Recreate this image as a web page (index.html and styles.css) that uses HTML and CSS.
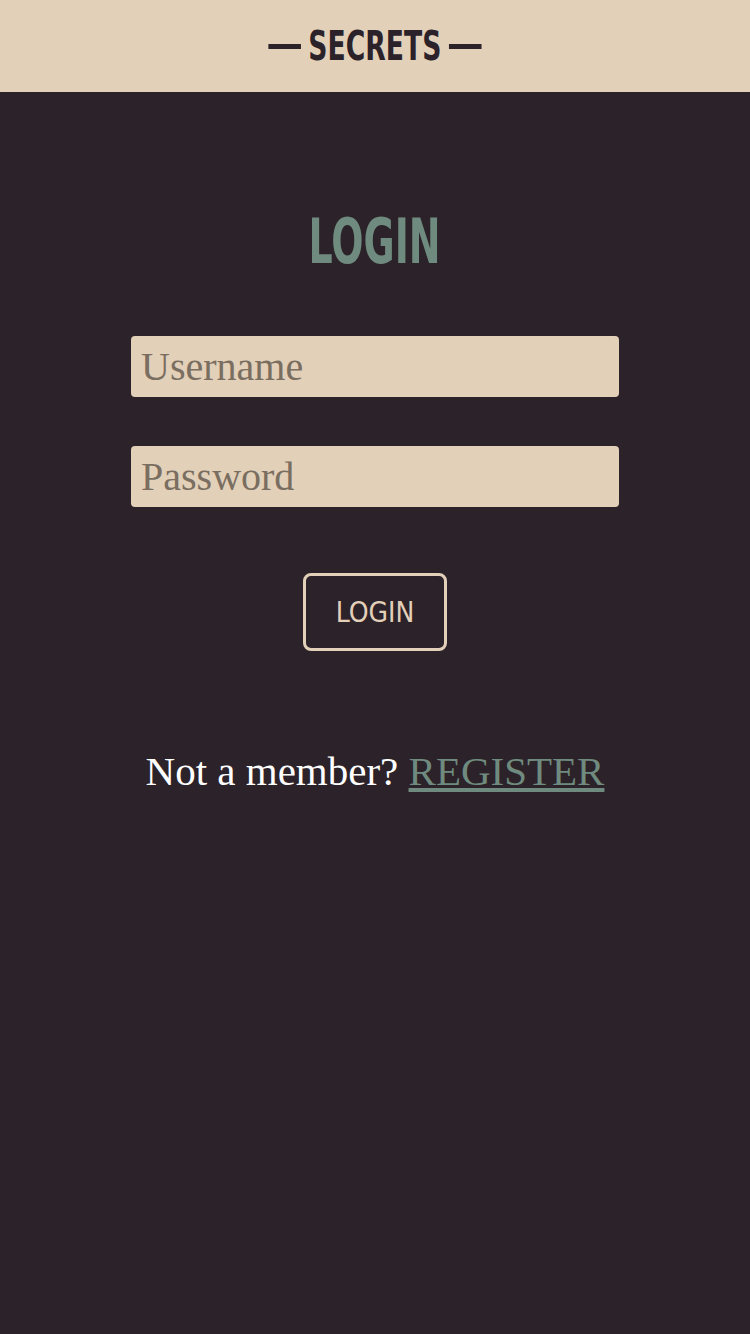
FILE: index.html
```html
<!DOCTYPE html>
<html>
<head>
<meta charset="utf-8">
<link rel="stylesheet" href="styles.css">
</head>
<body>
<header class="topbar">
  <h1 class="brand"><span class="dash"></span>SECRETS<span class="dash"></span></h1>
</header>
<main class="content">
  <h2 class="title">LOGIN</h2>
  <form class="form">
    <input class="field" type="text" placeholder="Username">
    <input class="field" type="password" placeholder="Password">
    <button class="btn" type="button">LOGIN</button>
  </form>
  <p class="note">Not a member? <a class="link" href="#">REGISTER</a></p>
</main>
</body>
</html>
```
FILE: styles.css
```css
html, body {
  margin: 0;
  padding: 0;
  background: #2c2229;
  height: 100%;
}
.topbar {
  background: #e3d0b9;
  height: 92px;
  display: flex;
  align-items: center;
  justify-content: center;
}
.brand {
  margin: 0;
  display: flex;
  align-items: center;
  gap: 10px;
  font-family: "DejaVu Sans Condensed", sans-serif;
  font-weight: 700;
  font-size: 40px;
  color: #2c2229;
  letter-spacing: 0;
  transform: scaleX(0.74);
}
.dash {
  display: inline-block;
  width: 44px;
  height: 5px;
  background: #2c2229;
}
.content {
  display: flex;
  flex-direction: column;
  align-items: center;
}
.title {
  margin: 114px 0 0;
  font-family: "DejaVu Sans Condensed", sans-serif;
  font-weight: 700;
  font-size: 63px;
  line-height: 72px;
  color: #6f8a7e;
  transform: scaleX(0.67);
}
.form {
  margin-top: 58px;
  display: flex;
  flex-direction: column;
  align-items: center;
  gap: 49px;
}
.field {
  box-sizing: border-box;
  width: 488px;
  height: 61px;
  border: none;
  border-radius: 4px;
  background: #e3d0b9;
  padding: 0 10px;
  font-family: "Liberation Serif", serif;
  font-size: 40px;
  color: #4a3f38;
  outline: none;
}
.field::placeholder {
  color: #7a6e60;
}
.btn {
  margin-top: 17px;
  box-sizing: border-box;
  width: 144px;
  height: 78px;
  border: 3px solid #e3d0b9;
  border-radius: 8px;
  background: transparent;
  color: #e3d0b9;
  font-family: "DejaVu Sans Condensed", "DejaVu Sans", sans-serif;
  font-size: 28px;
  padding: 0;
}
.note {
  margin: 96px 0 0;
  font-family: "Liberation Serif", serif;
  font-size: 41px;
  color: #ffffff;
}
.link {
  color: #6f8a7e;
}
```
